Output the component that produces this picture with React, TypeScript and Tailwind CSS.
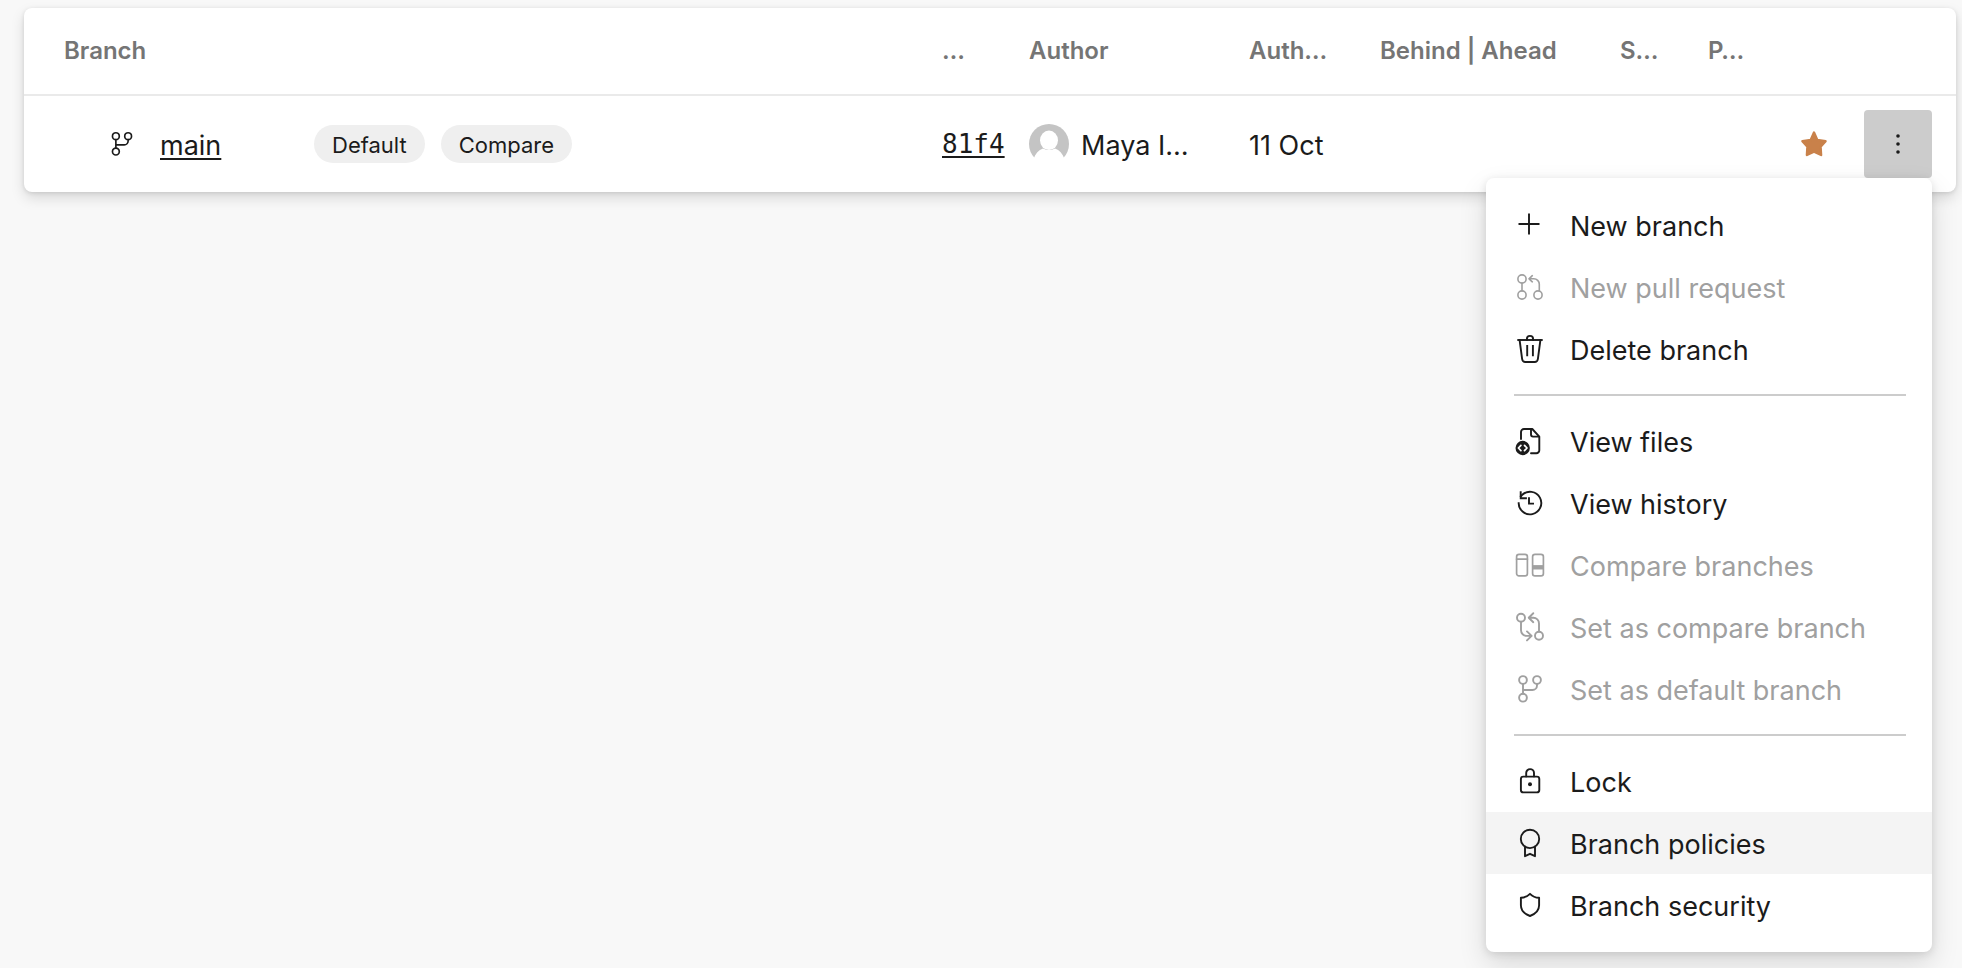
import type { ReactNode } from "react";

function Glyph({ children, className = "size-8" }: { children: ReactNode; className?: string }) {
  return (
    <svg
      viewBox="0 0 32 32"
      className={`${className} shrink-0`}
      fill="none"
      stroke="currentColor"
      strokeWidth="1.9"
      strokeLinecap="round"
      strokeLinejoin="round"
      aria-hidden="true"
    >
      {children}
    </svg>
  );
}

const branchPaths = (
  <>
    <circle cx="9" cy="7" r="3.9" />
    <circle cx="23" cy="7" r="3.9" />
    <circle cx="9" cy="24.7" r="3.9" />
    <path d="M9 11v9.7M9 17h9.5a4.5 4.5 0 0 0 4.5-4.5V11" />
  </>
);

type Item = { label: string; icon: ReactNode; disabled?: boolean; active?: boolean };

const groups: Item[][] = [
  [
    { label: "New branch", icon: <path d="M15 4.5v21M4.5 15h21" strokeLinecap="butt" /> },
    {
      label: "New pull request",
      disabled: true,
      icon: (
        <g strokeWidth="1.6">
          <circle cx="8" cy="8" r="4.1" />
          <circle cx="8" cy="24" r="4.1" />
          <circle cx="24" cy="24" r="4.1" />
          <path d="M8 12v8M15 7.8h4.8a5.5 5.5 0 0 1 5.500 5.500V20M18.300 4.700 15 7.800l3.300 3" />
        </g>
      ),
    },
    {
      label: "Delete branch",
      icon: (
        <>
          <path d="M3.3 7h25.4" strokeLinecap="butt" />
          <path d="M12.9 7V6a3.1 3.1 0 0 1 6.2 0v1M5.6 7l2.5 18.8A3.2 3.2 0 0 0 11.3 29h9.4a3.2 3.2 0 0 0 3.2-3.2L26.4 7" />
          <path d="M13.2 12v11.2M18.9 12v11.2" strokeLinecap="butt" />
        </>
      ),
    },
  ],
  [
    {
      label: "View files",
      icon: (
        <>
          <path d="M7 14V7a3 3 0 0 1 3-3h8.3l7 7.6V25a3 3 0 0 1-3 3.2H17" />
          <path d="M17 4v5.6a2 2 0 0 0 2 2h6" />
          <circle cx="8.7" cy="23" r="7.2" fill="currentColor" stroke="none" />
          <path d="M6.9 20.3 4.4 23l2.5 2.7M10.5 20.3 13 23l-2.5 2.7" stroke="#fff" strokeWidth="1.7" />
        </>
      ),
    },
    {
      label: "View history",
      icon: (
        <g strokeLinecap="butt" strokeLinejoin="miter">
          <path d="M4.7 15.2A11.3 11.3 0 1 0 8 8L6.2 10" />
          <path d="M6.7 4.3v6.9h6.2M15 10.2v6.4h5" />
        </g>
      ),
    },
    {
      label: "Compare branches",
      disabled: true,
      icon: (
        <g strokeWidth="1.7">
          <rect x="2.6" y="5.4" width="10.8" height="21.4" rx="2.4" />
          <rect x="18.6" y="5.4" width="10.8" height="21.4" rx="2.4" />
          <path d="M2.6 10.2h10.8" />
          <path d="M18.6 18.3h10.8" strokeWidth="4.4" strokeLinecap="butt" />
        </g>
      ),
    },
    {
      label: "Set as compare branch",
      disabled: true,
      icon: (
        <>
          <circle cx="7" cy="6.7" r="4" />
          <circle cx="25" cy="24.7" r="4" />
          <path d="M7 10.8v8.4a5.7 5.7 0 0 0 5.7 5.7h4.8M13 20.4l4.6 4.5-4.6 4.5" />
          <path d="M25 20.6v-8.2a5.7 5.7 0 0 0-5.7-5.7h-4.5M19.3 2.2l-4.6 4.5 4.6 4.5" />
        </>
      ),
    },
    { label: "Set as default branch", disabled: true, icon: branchPaths },
  ],
  [
    {
      label: "Lock",
      icon: (
        <>
          <rect x="6.9" y="11.6" width="18.4" height="15.8" rx="2.4" />
          <path d="M12.2 11.4V8a3.9 3.9 0 0 1 7.8 0v3.4" />
          <circle cx="16" cy="19.2" r="2" fill="currentColor" stroke="none" />
        </>
      ),
    },
    {
      label: "Branch policies",
      active: true,
      icon: (
        <>
          <circle cx="16" cy="11.9" r="9.2" />
          <path d="M11 19.8v9.4l5-2.4 5 2.4v-9.4" />
        </>
      ),
    },
    {
      label: "Branch security",
      icon: <path d="M16 4.800c2.400 2.400 5.600 3.800 9.100 4v7.500c0 5-3.600 8.700-9.100 10.700-5.500-2-9.100-5.700-9.100-10.700V8.800c3.500-.2 6.700-1.600 9.100-4Z" />,
    },
  ],
];

function BranchMenu() {
  return (
    <div
      role="menu"
      className="absolute top-full right-0 z-10 w-[446px] rounded-lg bg-white py-4 text-left shadow-[0_12px_28px_rgba(0,0,0,0.13),0_2px_8px_rgba(0,0,0,0.11)]"
    >
      {groups.map((items, index) => (
        <div key={index}>
          {index > 0 && <hr className="my-3.5 mr-[26px] ml-7 border-t-2 border-[#cccccc]" />}
          {items.map((item) => (
            <button
              key={item.label}
              type="button"
              role="menuitem"
              disabled={item.disabled}
              className={`flex h-[62px] w-full items-center gap-6 pl-7 text-[27px] disabled:text-[#a0a0a0] ${
                item.active ? "bg-[#f4f4f4]" : ""
              }`}
            >
              <Glyph>{item.icon}</Glyph>
              <span className="pt-1">{item.label}</span>
            </button>
          ))}
        </div>
      ))}
    </div>
  );
}

export default function App() {
  return (
    <main className="min-h-screen bg-[#f8f8f8] pt-2 pr-1.5 pl-6 font-['Inter',sans-serif] text-[#1b1b1b]">
      <div className="rounded-lg bg-white shadow-[0_6px_14px_rgba(0,0,0,0.13),0_1px_4px_rgba(0,0,0,0.11)]">
        <table className="w-full table-fixed border-collapse text-left">
          <colgroup>
            <col />
            <col className="w-[87px]" />
            <col className="w-[220px]" />
            <col className="w-[131px]" />
            <col className="w-[240px]" />
            <col className="w-[88px]" />
            <col className="w-[64px]" />
            <col className="w-[184px]" />
          </colgroup>
          <thead>
            <tr className="h-[87px] border-b-2 border-[#eaeaea] text-[24px] whitespace-nowrap text-[#757575] [&>th]:p-0 [&>th]:font-semibold">
              <th scope="col">
                <span className="pl-10">Branch</span>
              </th>
              <th scope="col">…</th>
              <th scope="col">Author</th>
              <th scope="col">Auth…</th>
              <th scope="col">Behind | Ahead</th>
              <th scope="col">S…</th>
              <th scope="col">P…</th>
              <td />
            </tr>
          </thead>
          <tbody>
            <tr className="h-[97px] text-[27px] whitespace-nowrap [&>td]:p-0">
              <td>
                <div className="flex items-center pl-[84px]">
                  <Glyph className="size-7">{branchPaths}</Glyph>
                  <div className="ml-6 w-[154px] pt-1">
                    <a href="#main" className="underline decoration-2 underline-offset-3">
                      main
                    </a>
                  </div>
                  <div className="flex gap-4 text-[22px]">
                    <span className="flex h-[38px] items-center rounded-full bg-[#efefef] px-[18px] pt-0.5">Default</span>
                    <span className="flex h-[38px] items-center rounded-full bg-[#efefef] px-[18px] pt-0.5">Compare</span>
                  </div>
                </div>
              </td>
              <td>
                <a
                  href="#81f4"
                  className="font-['DejaVu_Sans_Mono',monospace] text-[26px] underline decoration-2 underline-offset-3"
                >
                  81f4
                </a>
              </td>
              <td>
                <div className="flex items-center gap-3">
                  <svg viewBox="0 0 40 40" className="size-10 shrink-0" aria-hidden="true">
                    <circle cx="20" cy="20" r="20" fill="#c4c4c4" />
                    <ellipse cx="20" cy="16.3" rx="9" ry="9.7" fill="#fff" />
                    <path d="M4.500 35C6.500 29.500 9.500 26 14 24.500q6 3 12 0c4.500 1.500 7.500 5 9.500 10.500V40h-31Z" fill="#fff" />
                  </svg>
                  <span className="pt-1">Maya I…</span>
                </div>
              </td>
              <td>
                <div className="pt-1">11 Oct</div>
              </td>
              <td />
              <td />
              <td />
              <td>
                <div className="flex items-center justify-end gap-9 pr-6">
                  <button type="button" aria-label="Favorite" className="text-[#c9814a]">
                    <svg viewBox="0 0 28 28" className="size-7" fill="currentColor" stroke="currentColor" strokeWidth="2.4" strokeLinejoin="round" aria-hidden="true">
                      <path d="M14 2.600 17.300 10 25.600 11.200 20.600 16.800 21.100 25 14 21.600 6.900 25 7.400 16.800 2.400 11.200 10.700 10Z" />
                    </svg>
                  </button>
                  <div className="relative">
                    <button
                      type="button"
                      aria-label="More options"
                      aria-haspopup="menu"
                      aria-expanded="true"
                      className="flex size-[68px] items-center justify-center rounded bg-[#cccccc]"
                    >
                      <svg viewBox="0 0 24 24" className="size-6" fill="currentColor" aria-hidden="true">
                        <circle cx="12" cy="4" r="1.8" />
                        <circle cx="12" cy="12" r="1.8" />
                        <circle cx="12" cy="20" r="1.8" />
                      </svg>
                    </button>
                    <BranchMenu />
                  </div>
                </div>
              </td>
            </tr>
          </tbody>
        </table>
      </div>
    </main>
  );
}
